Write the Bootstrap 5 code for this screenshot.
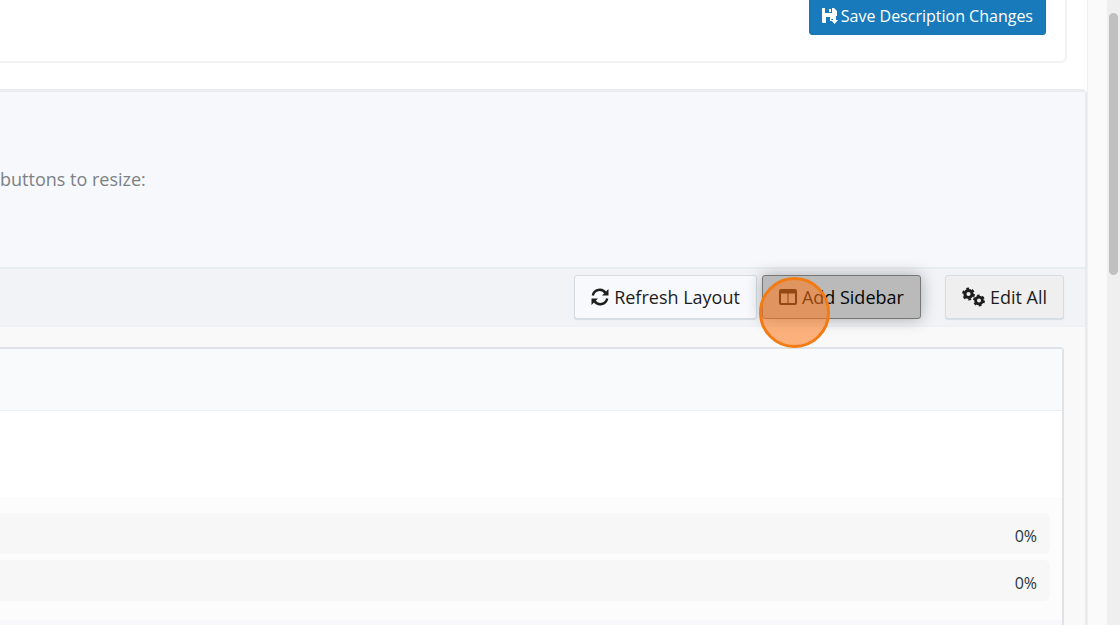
<!DOCTYPE html>
<html lang="en">
<head>
<meta charset="utf-8">
<meta name="viewport" content="width=device-width, initial-scale=1">
<title>Layout editor</title>
<link rel="stylesheet" href="https://cdn.jsdelivr.net/npm/bootstrap@5.3.0/dist/css/bootstrap.min.css">
<style>
body{font-family:"Open Sans","Noto Sans",sans-serif;background:#fafafa;color:#1d1d1d}
.page-frame{height:100vh}
.page-main{background:#fff;border-right:1px solid #eeeff1;min-width:0}
.desc-box{border:2px solid #f0f2f4;border-width:0 2px 2px 0;border-radius:0 0 6px 0;margin-right:20px;padding:0 19px 26px 0;height:63px}
.desc-box .btn{margin-top:-4px;height:39px;--bs-btn-font-size:16px;--bs-btn-line-height:24px;--bs-btn-padding-y:6px;--bs-btn-padding-x:12px;--bs-btn-border-radius:3px;--bs-btn-color:#fff;--bs-btn-bg:#187abb;--bs-btn-border-color:#1874b1;gap:3px}
.layout-panel{margin-top:26px;border-top:3px solid #e9edf0;border-right:2px solid #e8eaed;border-radius:0 5px 0 0;background:#f9f9f9}
.layout-intro{background:#f7f8fc;height:175px;font-size:18px;line-height:28px;color:#7b8286;padding-top:73px}
.layout-tools{background:#f2f3f7;border-top:2px solid #e8edf0;border-bottom:1px solid #edf0f2;height:60px;padding:6px 21px 0 0;gap:5px}
.layout-tools .btn{height:44px;--bs-btn-font-size:18px;--bs-btn-line-height:28px;--bs-btn-padding-y:6px;--bs-btn-padding-x:16px;--bs-btn-border-radius:3px;--bs-btn-border-color:#d5dce3;--bs-btn-color:#1d1d1d;box-shadow:0 1px 1px #d5dce3;gap:5px}
.layout-tools .refresh{--bs-btn-bg:#f8f9fd}
.layout-tools .sidebar-add{--bs-btn-bg:#bababa;--bs-btn-border-color:#777;--bs-btn-color:#050505;box-shadow:0 0 16px rgba(0,0,0,.3)}
.layout-tools .edit{--bs-btn-bg:#efefef;margin-left:19px}
.click-ring{position:absolute;left:-3px;top:2px;width:71px;height:71px;border:3px solid #f27b13;border-radius:50%;background:rgba(255,118,24,.55);pointer-events:none;z-index:2}
.grid-box{margin:20px 21px 0 0;border:2px solid #dfe3e7;border-width:2px 2px 0 0;border-right-color:#e0e3e6;border-radius:0 4px 0 0;background:#fff}
.grid-head{height:62px;background:#f9fafc;border-bottom:1px solid #eceef0}
.grid-blank{height:86px}
.grid-rows{background:#fcfcfc;padding:16px 12px 19px 0}
.grid-row{height:41px;border-radius:0 6px 6px 0;background:#f7f7f7;color:#263640;font-size:16px;padding:4px 13px 0 0}
.grid-row + .grid-row{margin-top:6px}
.grid-foot{background:#f8f8fc}
.track{width:13px;background:#efefef;margin-left:19px;padding:13px 2px 0}
.thumb{height:262px;border-radius:5px;background:#c0c0c0}
</style>
</head>
<body>
<div class="page-frame d-flex overflow-hidden">
<main class="page-main flex-grow-1 d-flex flex-column">
  <section class="desc-box d-flex justify-content-end align-items-start flex-shrink-0">
    <button type="button" class="btn d-flex align-items-center"><svg width="16" height="16" viewBox="0 0 16 16" aria-hidden="true"><path fill="#fff" fill-rule="evenodd" d="M1 0h2v5h7V0h2l3 3v5h-4v3H9l1 2H8V9H4v6H1Q0 15 0 14V1Q0 0 1 0ZM7 1h2v3H7Z"/><path fill="#fff" d="M11 8h3v4h2l-3.500 4L9 12h2Z"/></svg>Save Description Changes</button>
  </section>
  <section class="layout-panel flex-grow-1 d-flex flex-column">
    <p class="layout-intro mb-0">buttons to resize:</p>
    <div class="layout-tools d-flex justify-content-end align-items-start flex-shrink-0">
      <button type="button" class="btn refresh d-flex align-items-center"><svg width="18" height="18" viewBox="0 0 18 18" aria-hidden="true"><g fill="none" stroke="#1d1d1d" stroke-width="2.400"><path d="M1.800 7.500A7 7 0 0 1 14.500 5"/><path d="M16.200 10.500A7 7 0 0 1 3.500 13"/></g><path fill="#1d1d1d" d="M17.500 1v6.500H11ZM.5 17v-6.500H7Z"/></svg>Refresh Layout</button>
      <div class="position-relative">
        <button type="button" class="btn sidebar-add d-flex align-items-center"><svg width="18" height="16" viewBox="0 0 18 16" aria-hidden="true"><path fill="#111" fill-rule="evenodd" d="M2 0h14q2 0 2 2v12q0 2-2 2H2q-2 0-2-2V2Q0 0 2 0ZM2 4.500v9.500h6.500V4.500ZM9.500 4.500v9.500H16V4.500Z"/></svg>Add Sidebar</button>
        <span class="click-ring"></span>
      </div>
      <button type="button" class="btn edit d-flex align-items-center"><svg width="23" height="20" viewBox="0 0 23 20" aria-hidden="true"><g fill="none" stroke="#1d1d1d"><circle cx="6.500" cy="7" r="3.600" stroke-width="3"/><circle cx="6.500" cy="7" r="5.400" stroke-width="2" stroke-dasharray="2.800 2.855"/><circle cx="17" cy="13.500" r="3.400" stroke-width="2.800"/><circle cx="17" cy="13.500" r="5" stroke-width="2" stroke-dasharray="2.600 2.636"/></g></svg>Edit All</button>
    </div>
    <div class="grid-box flex-grow-1 d-flex flex-column">
      <div class="grid-head"></div>
      <div class="grid-blank"></div>
      <div class="grid-rows d-flex flex-column">
        <div class="grid-row d-flex align-items-center justify-content-end">0%</div>
        <div class="grid-row d-flex align-items-center justify-content-end">0%</div>
      </div>
      <div class="grid-foot flex-grow-1"></div>
    </div>
  </section>
</main>
<div class="track flex-shrink-0" aria-hidden="true"><div class="thumb"></div></div>
</div>
<script src="https://cdn.jsdelivr.net/npm/bootstrap@5.3.0/dist/js/bootstrap.bundle.min.js"></script>
</body>
</html>
